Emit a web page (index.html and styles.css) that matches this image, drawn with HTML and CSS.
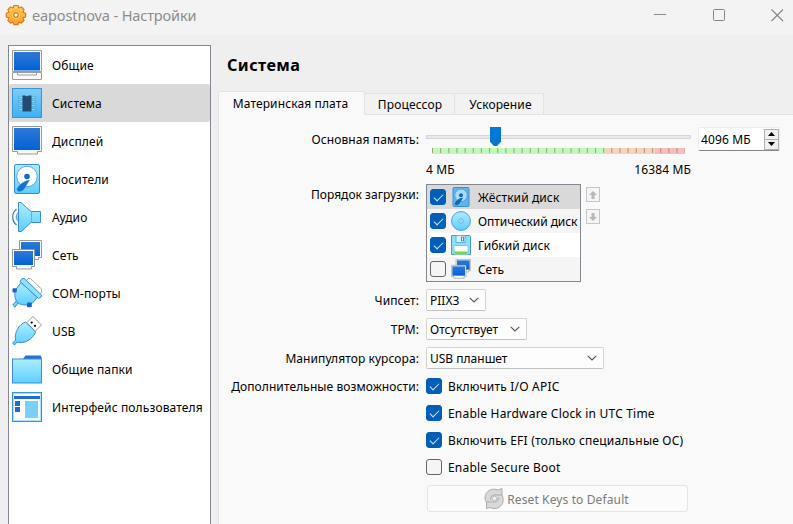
FILE: index.html
```html
<!DOCTYPE html>
<html lang="ru">
<head>
<meta charset="utf-8">
<title>eapostnova - Настройки</title>
<link rel="stylesheet" href="styles.css">
</head>
<body>
<svg class="defs" width="0" height="0" aria-hidden="true">
  <defs>
    <linearGradient id="blue" x1="0" y1="0" x2="0" y2="1"><stop offset="0" stop-color="#3079d6"/><stop offset="1" stop-color="#0062d8"/></linearGradient>
    <linearGradient id="sky" x1="0" y1="0" x2="0" y2="1"><stop offset="0" stop-color="#adeeff"/><stop offset="1" stop-color="#5ccfff"/></linearGradient>
    <linearGradient id="chipbg" x1="0" y1="0" x2="0" y2="1"><stop offset="0" stop-color="#7fcdf7"/><stop offset="1" stop-color="#38b3f5"/></linearGradient>
    <linearGradient id="sun" x1="0" y1="0" x2="0" y2="1"><stop offset="0" stop-color="#ffd45c"/><stop offset="1" stop-color="#f9a02c"/></linearGradient>
    <symbol id="disk" viewBox="0 0 30 30">
      <rect x="2.5" y=".5" width="25" height="29" rx="1.5" fill="url(#sky)" stroke="#3a8ddb"/>
      <circle cx="15" cy="12.5" r="10.3" fill="#fff" stroke="#5a9cd8" stroke-width=".9"/>
      <circle cx="15" cy="12.5" r="2.8" fill="#1468cc"/>
      <path d="M17.5 16.500c-4-1-12 5.500-12.500 9 .2 2.200 3 2.200 5 1.200 3-1.500 3.500-5 7.500-10.200z" fill="#176fd0" stroke="#3a8ddb" stroke-width=".6"/>
    </symbol>
    <symbol id="disk-small" viewBox="0 0 20 20">
      <rect x="2" y=".5" width="16" height="19" rx="1" fill="#5bb5ee" stroke="#3a8ddb"/>
      <circle cx="10" cy="8.300" r="6.300" fill="#a9dbf8" stroke="#4a94d4" stroke-width=".8"/>
      <circle cx="10" cy="8.300" r="2" fill="#1468b8"/>
      <path d="M12 11c-3-1-8 3.500-8.200 6 .2 1.500 2 1.500 3.200.8 2-1 2.500-3.300 5-6.800z" fill="#1766b4"/>
    </symbol>
    <symbol id="net" viewBox="0 0 30 30">
      <path d="M7.500.5h22v17h-3v2h-9v-2h-10z" fill="#f5f5f5" stroke="#999"/>
      <rect x="9" y="2" width="19" height="14" fill="url(#blue)"/>
      <path d="M.5 9.500h22v17h-3v2.500h-15v-2.500h-4z" fill="#fafafa" stroke="#999"/>
      <rect x="2" y="11" width="19" height="14" fill="url(#blue)"/>
    </symbol>
    <symbol id="down" viewBox="0 0 10 6"><path d="M.7.8 5 5 9.300.8" fill="none" stroke="#555" stroke-width="1.100"/></symbol>
  </defs>
</svg>

<header class="titlebar">
  <svg class="app-icon" width="22" height="22" viewBox="0 0 22 22">
    <path d="M9 1.500h4l.8 2.500 2.700-1 2.500 2.600-1 2.600 2.600 1v3.800l-2.600.9 1 2.600-2.700 2.600-2.500-1-.9 2.600H9l-1-2.600-2.500 1-2.600-2.600 1-2.600-2.600-.9V9.200l2.600-1-1-2.600L5.500 3 8 4z" fill="url(#sun)" stroke="#df7616" stroke-width="1.200" stroke-linejoin="round"/>
    <circle cx="11" cy="11" r="5" fill="#ffca58" stroke="#f0a040" stroke-width=".8"/>
    <circle cx="11" cy="11" r="2.300" fill="#fff1d2" stroke="#d97814" stroke-width="1.200"/>
  </svg>
  <span class="caption">eapostnova - Настройки</span>
  <span class="window-buttons">
    <svg width="14" height="14" viewBox="0 0 14 14"><path d="M1 6.500h12" stroke="#8b8b8b"/></svg>
    <svg width="14" height="14" viewBox="0 0 14 14"><rect x="1.500" y="1.500" width="11" height="11" rx="1" fill="none" stroke="#858585"/></svg>
    <svg width="14" height="14" viewBox="0 0 14 14"><path d="m1.500 1.500 11.500 11.500m0-11.500-11.500 11.500" stroke="#858585" stroke-width="1.100"/></svg>
  </span>
</header>

<div class="body">
  <nav class="sidebar">
    <a class="item">
      <svg viewBox="0 0 30 30"><path d="M.5.500h29v21h-29zM.5 22.500h29v7h-29z" fill="#fafafa" stroke="#9c9c9c"/><rect x="2" y="2" width="26" height="18.500" fill="url(#blue)"/><path d="M1 22.500h4.500v2.500h19v-2.500H29" fill="none" stroke="#9c9c9c"/></svg>
      <span>Общие</span></a>
    <a class="item selected">
      <svg viewBox="0 0 30 30"><rect x=".5" y=".5" width="29" height="29" fill="url(#chipbg)" stroke="#3694dc"/><path d="M6 9.500h18M6 13.500h18M6 17.500h18M6 21.500h18" stroke="#57a5d8" stroke-width="2"/><path d="M7 9.500h16M7 13.500h16M7 17.500h16M7 21.500h16" stroke="#8cccf0"/><path d="M10.500 7.500h3l.8.800h1.400l.8-.8h3v16h-9z" fill="#234a70"/></svg>
      <span>Система</span></a>
    <a class="item">
      <svg viewBox="0 0 30 30"><path d="M.5.500h29v25h-4v2.500h-20v-2.500h-5z" fill="#f7f7f7" stroke="#999"/><rect x="2" y="2" width="26" height="22" fill="url(#blue)"/></svg>
      <span>Дисплей</span></a>
    <a class="item"><svg><use href="#disk"/></svg><span>Носители</span></a>
    <a class="item">
      <svg viewBox="0 0 30 30"><path d="M4.500 7c-5 4-5 12 0 16" fill="none" stroke="#2f7dd0" stroke-width="1.200"/><path d="M6.500 10.500c-3 2-3 7 0 9" fill="#9adfff" stroke="#4a98dd"/><path d="M6.500.5h2.500l10 9h9.500v11h-9.500L9.500 29.500h-3z" fill="url(#sky)" stroke="#3a8ddb" stroke-linejoin="round"/><path d="M19.500 9.500v11" stroke="#5eb2ec"/></svg>
      <span>Аудио</span></a>
    <a class="item"><svg><use href="#net"/></svg><span>Сеть</span></a>
    <a class="item">
      <svg viewBox="0 0 30 30"><path d="m14 3.500 2-3h2.500L29.500 11v3.500l-2 2z" fill="#fff" stroke="#aaa"/><path d="M.8 27 5 22l2 2-4 5.200z" fill="#76d3fc" stroke="#3a8ddb"/><path d="M9 4.500 3.500 12c-1.500 5-.5 10 2.500 13 4 2.500 10 2.500 14 .5l5.500-6z" fill="url(#sky)" stroke="#3a8ddb"/><path d="m8 3.500 2-3 2-.2L29.500 17l-.3 2-2.700 1.500z" fill="#8fe3fe" stroke="#3a8ddb"/><rect x=".5" y="10.200" width="4.300" height="4.300" rx="1" fill="#1463cb"/><rect x="15" y="24.500" width="4.800" height="4.800" rx="1" fill="#1463cb"/></svg>
      <span>COM-порты</span></a>
    <a class="item">
      <svg viewBox="0 0 30 30"><path d="M15 6.500 21 .5 29.500 9 23 15.500z" fill="#fff" stroke="#999"/><circle cx="19.700" cy="6.600" r="1.100"/><circle cx="23" cy="9.800" r="1.100"/><path d="M13.500 6 23.700 16C21 22.500 13 28.500 5 26L2.500 29 .6 27l3-3C2 17 7 8 13.500 6z" fill="url(#sky)" stroke="#3a8ddb" stroke-linejoin="round"/></svg>
      <span>USB</span></a>
    <a class="item">
      <svg viewBox="0 0 30 30"><path d="m11 5 2.500-3.500h15L29.500 3v2z" fill="#2673d3"/><rect x=".5" y="5" width="29" height="24" fill="url(#sky)" stroke="#3a8ddb"/></svg>
      <span>Общие папки</span></a>
    <a class="item">
      <svg viewBox="0 0 30 30"><rect x=".5" y=".5" width="29" height="29" fill="#fff" stroke="#3694dc"/><rect x="1.500" y="1.500" width="27" height="27" fill="none" stroke="#a7e5fd"/><path d="M2 4h26v3H2z" fill="#1e6ed3"/><path d="M3 9h5v5H3zM3 15h5v5H3z" fill="#1b6bd3"/><path d="M13 9h13v17H13z" fill="#7ad0fd"/></svg>
      <span>Интерфейс пользователя</span></a>
  </nav>

  <main class="page">
    <h1>Система</h1>
    <div class="tabs">
      <span class="tab active">Материнская плата</span>
      <span class="tab processor">Процессор</span>
      <span class="tab accel">Ускорение</span>
    </div>
    <section class="pane">
      <label class="label memory-label">Основная память:</label>
      <div class="memory">
        <div class="slider">
          <div class="track"><i class="thumb"></i></div>
          <svg class="scale" width="253" height="6" viewBox="0 0 253 6">
            <path d="M0 0h173v6H0z" fill="#c0f9b9"/><path d="M173 0h50v6h-50z" fill="#fbd1b8"/><path d="M223 0h30v6h-30z" fill="#fcbcbc"/>
            <path d="M0 2.500h253" stroke="#8d8d78" stroke-opacity=".8" stroke-width="5" stroke-dasharray="1 7.150"/>
          </svg>
          <div class="limits"><span>4 МБ</span><span>16384 МБ</span></div>
        </div>
        <div class="spin"><span>4096 МБ</span>
          <span class="steps"><i><svg width="7" height="4"><path d="M0 4 3.500 0 7 4z"/></svg></i><i><svg width="7" height="4"><path d="m0 0 3.500 4L7 0z"/></svg></i></span>
        </div>
      </div>

      <label class="label boot-label">Порядок загрузки:</label>
      <div class="boot">
        <ul class="boot-list">
          <li class="current"><i class="check on"></i><svg><use href="#disk-small"/></svg><span>Жёсткий диск</span></li>
          <li class="alt"><i class="check on"></i><svg viewBox="0 0 20 20"><circle cx="10" cy="10" r="9.400" fill="url(#sky)" stroke="#4a9be0"/><circle cx="10" cy="10" r="2.200" fill="#e6faff" stroke="#5fa9df"/><circle cx="10" cy="10" r=".7" fill="#377fba"/></svg><span>Оптический диск</span></li>
          <li><i class="check on"></i><svg viewBox="0 0 20 20"><path d="M.5.500h18l1 1v18H.5z" fill="#8edffc" stroke="#4597de"/><path d="M5 .5h9v7H5z" fill="#d4f3ff" stroke="#5fb2e5"/><path d="M10.500 2h2v4h-2z" fill="#fff" stroke="#398bd0"/><path d="M3 10.500h14v9H3z" fill="#fff" stroke="#7ac8ed"/><path d="M3.500 16.500h13v2.500h-13z" fill="#82dd22"/></svg><span>Гибкий диск</span></li>
          <li class="alt"><i class="check"></i><svg><use href="#net"/></svg><span>Сеть</span></li>
        </ul>
        <div class="movers">
          <i><svg width="8" height="8" viewBox="0 0 8 8"><path d="m4 0 4 4H5.500v4h-3V4H0z"/></svg></i>
          <i><svg width="8" height="8" viewBox="0 0 8 8"><path d="m4 8 4-4H5.500V0h-3v4H0z"/></svg></i>
        </div>
      </div>

      <label class="label">Чипсет:</label>
      <div class="combo chipset"><span>PIIX3</span><svg><use href="#down"/></svg></div>
      <label class="label">TPM:</label>
      <div class="combo tpm"><span>Отсутствует</span><svg><use href="#down"/></svg></div>
      <label class="label">Манипулятор курсора:</label>
      <div class="combo pointer"><span>USB планшет</span><svg><use href="#down"/></svg></div>

      <label class="label extras-label">Дополнительные возможности:</label>
      <div class="option"><i class="check on"></i><span>Включить I/O APIC</span></div>
      <div class="option"><i class="check on"></i><span>Enable Hardware Clock in UTC Time</span></div>
      <div class="option"><i class="check on"></i><span>Включить EFI (только специальные ОС)</span></div>
      <div class="option"><i class="check"></i><span>Enable Secure Boot</span></div>
      <div class="reset">
        <svg width="21" height="21" viewBox="0 0 21 21"><path d="M1 10C1 3 8-.5 14 2l4-1.500V7c3 6 0 13-7 13.500-3 0-4-.5-5-1L2.500 20.500V14C1.500 13 1 12 1 10z" fill="#d9d9d9" stroke="#aaa"/><path d="M18 7h-6M2.500 14h6" stroke="#aaa"/><path d="M6.500 11.500c0-4 3-5 5.500-4.500M14.500 9.500c0 4-3 5-5.500 4.500" fill="none" stroke="#aaa"/><circle cx="10.500" cy="10.500" r="2.200" fill="#f4f4f4" stroke="#b0b0b0" stroke-width=".8"/></svg>
        <span>Reset Keys to Default</span>
      </div>
    </section>
  </main>
</div>
</body>
</html>
```

FILE: styles.css
```css
* { box-sizing: border-box; }
html, body { margin: 0; height: 524px; overflow: hidden; }
body {
  display: flex;
  flex-direction: column;
  background: #efefef;
  color: #000;
  font: 12px/16px "Noto Sans", "DejaVu Sans", sans-serif;
  letter-spacing: .12px;
  white-space: nowrap;
}
i { font-style: normal; }
svg { flex: none; display: block; }
.defs { position: absolute; }

.titlebar {
  display: flex;
  align-items: center;
  flex: none;
  height: 34px;
  padding: 0 9px 4px 5px;
  background: #f3f3f3;
}
.caption { margin-left: 5px; font-size: 14.5px; line-height: 20px; letter-spacing: -.13px; color: #8c8c8c; }
.window-buttons { display: flex; gap: 44.500px; margin-left: auto; }

.body { display: flex; flex: 1; min-height: 0; }
.sidebar {
  flex: none;
  width: 203px;
  height: 490px;
  margin: 11px 0 0 8px;
  border: 1px solid #828790;
  border-bottom: 0;
  background: #fff;
}
.item { display: flex; align-items: center; gap: 10px; height: 38px; padding-left: 3px; }
.item svg { width: 30px; height: 30px; }
.item span { padding-top: 2px; }
.item.selected { background: #d9d9d9; border-radius: 2px; }

.page { display: flex; flex-direction: column; flex: 1; margin-left: 7px; }
h1 { margin: 20px 0 0 9px; font-size: 16.200px; line-height: 22px; font-weight: 700; letter-spacing: .4px; }
.tabs { display: flex; align-items: flex-end; height: 24px; margin-top: 14px; }
.tab {
  height: 21px;
  padding-left: 1px;
  border: 1px solid #e3e3e3;
  border-bottom: 0;
  border-left: 0;
  background: #f2f2f2;
  line-height: 22px;
  text-align: center;
}
.tab.active {
  position: relative;
  width: 147px;
  height: 24px;
  margin-bottom: -1px;
  padding: 0 2px 0 0;
  border-left: 1px solid #e3e3e3;
  border-radius: 2px 2px 0 0;
  background: #f9f9f9;
  line-height: 24px;
}
.processor { width: 90px; }
.tab.accel { width: 89px; padding-left: 3px; }
.pane {
  display: grid;
  grid-template-columns: 200px 1fr;
  grid-template-rows: 69px 102px 29px 29px 29px 27px 27px 27px 27px 35px;
  column-gap: 7px;
  align-items: start;
  flex: 1;
  border: 1px solid #e3e3e3;
  border-width: 1px 0 0 1px;
  background: #f9f9f9;
}
.label { padding-top: 7px; text-align: right; letter-spacing: .08px; }
.memory-label { padding-top: 17px; letter-spacing: .12px; }
.boot-label { padding-top: 3px; letter-spacing: .02px; }
.extras-label { padding-top: 6px; }

.memory { display: flex; gap: 7px; margin-top: 12px; }
.slider { width: 265px; }
.track { position: relative; height: 4px; margin-top: 8px; border: 1px solid #d6d6d6; background: #e7eaea; }
.thumb {
  position: absolute;
  left: 63px;
  top: -9px;
  width: 11px;
  height: 19px;
  background: #0078d7;
  clip-path: polygon(0 0, 100% 0, 100% 78%, 64% 100%, 36% 100%, 0 78%);
}
.scale { margin: 9px 0 0 6px; }
.limits { display: flex; justify-content: space-between; margin-top: 8px; }
.spin {
  display: flex;
  align-items: center;
  justify-content: space-between;
  width: 82px;
  height: 24px;
  padding: 0 0 0 2px;
  border: 1px solid #ececec;
  border-bottom-color: #868686;
  border-radius: 2px;
  background: #fff;
}
.spin > span:first-child { padding-top: 2px; }
.steps { display: flex; flex-direction: column; }
.steps i {
  display: flex;
  align-items: center;
  justify-content: center;
  width: 15px;
  height: 11px;
  border: 1px solid #b0b0b0;
  background: #f0f0f0;
}
.steps i + i { margin-top: -1px; }

.boot { display: flex; gap: 5px; }
.boot-list { width: 155px; height: 98px; margin: 0; padding: 0; border: 1px solid #828790; background: #fff; list-style: none; letter-spacing: 0; }
.boot-list li { display: flex; align-items: center; height: 24px; padding-left: 3px; }
.boot-list svg { width: 20px; height: 20px; margin: 0 6px 0 5px; }
.boot-list span { padding: 1px 0 0 1px; }
.boot-list .current { background: #d9d9d9; letter-spacing: .1px; }
.boot-list .alt { background: #f5f5f5; letter-spacing: -.07px; }
.movers { display: flex; flex-direction: column; gap: 7px; margin-top: 3px; }
.movers i { display: flex; align-items: center; justify-content: center; width: 14px; height: 15px; border: 1px solid #c6c6c6; background: #f5f5f5; }
.movers path { fill: #b8b8b8; }

.check {
  display: flex;
  align-items: center;
  justify-content: center;
  flex: none;
  width: 16px;
  height: 16px;
  border: 1px solid #666;
  border-radius: 3px;
  background: #f5f5f5;
}
.check.on { border-color: #005fb8; background: #005fb8; }
.check.on::before {
  content: "";
  width: 8px;
  height: 4px;
  border: solid #d5e5f4;
  border-width: 0 0 1px 1px;
  transform: translateY(-1px) rotate(-45deg);
}

.combo {
  display: flex;
  align-items: center;
  justify-content: space-between;
  height: 22px;
  margin-top: 3px;
  padding: 0 6px 0 3px;
  border: 1px solid #d2d2d2;
  border-bottom-color: #c2c2c2;
  border-radius: 2px;
  background: #fdfdfd;
  letter-spacing: 0;
}
.combo span { padding-top: 2px; }
.combo svg { width: 10px; height: 6px; }
.chipset { width: 60px; }
.tpm { width: 101px; }
.pointer { width: 178px; }

.option { grid-column: 2; display: flex; gap: 6px; height: 17px; margin-top: 5px; letter-spacing: .2px; }
.option span { padding-top: 1px; }
.reset {
  grid-column: 2;
  display: flex;
  align-items: center;
  justify-content: center;
  gap: 2px;
  width: 261px;
  height: 27px;
  margin: 4px 0 0 1px;
  padding-right: 2px;
  border: 1px solid #e5e5e5;
  border-radius: 3px;
  background: #fbfbfb;
  color: #7a7a7a;
}
.reset span { padding-top: 2px; }
```
